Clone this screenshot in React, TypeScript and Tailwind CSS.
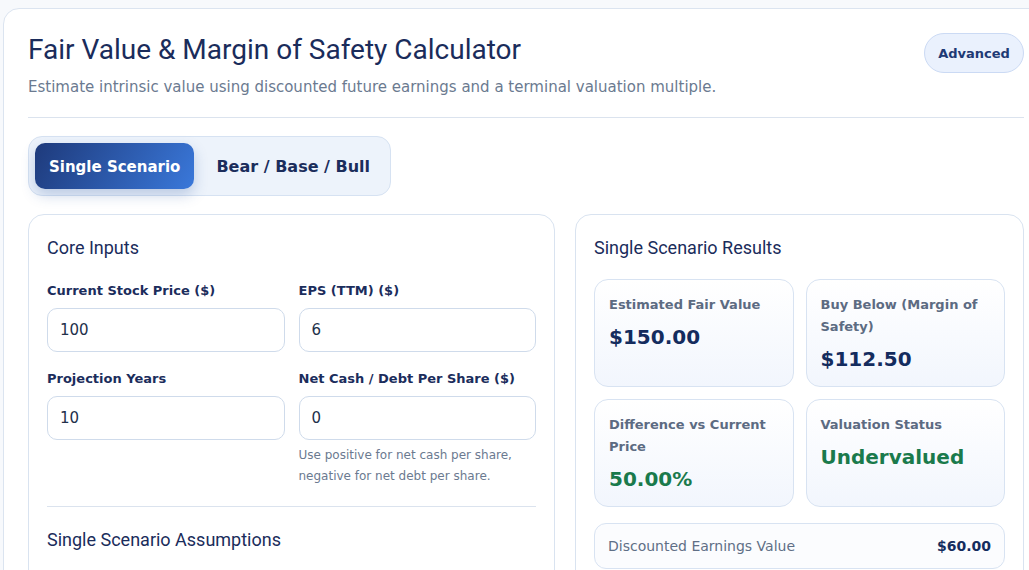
import React from "react";

function Field({ label, value, help }: { label: string; value: string; help?: React.ReactNode }) {
  return (
    <div className="flex flex-col">
      <label className="mb-[7px] text-[13px] font-bold leading-[20px] text-[#1b2d5c]">{label}</label>
      <input
        readOnly
        value={value}
        className="h-[44px] w-full rounded-[10px] border border-[#cfdbeb] bg-white px-[12px] text-[15px] text-[#22304a] outline-none"
      />
      {help && <p className="mt-[5px] text-[12px] leading-[21px] text-[#6b7a90]">{help}</p>}
    </div>
  );
}

function ResultCard({ label, value, green }: { label: string; value: string; green?: boolean }) {
  return (
    <div className="rounded-[14px] border border-[#d8e3f2] bg-[linear-gradient(180deg,#ffffff,#f2f6fd)] px-[14px] pb-[15px] pt-[14px]">
      <div className="text-[13px] font-bold leading-[22px] text-[#5c6b82]">{label}</div>
      <div
        className={
          "mt-[9px] text-[20px] font-bold leading-[24px] " + (green ? "text-[#1a7a4c]" : "text-[#142c5e]")
        }
      >
        {value}
      </div>
    </div>
  );
}

export default function App() {
  return (
    <div className="h-[570px] w-[1029px] overflow-hidden bg-[#f7f9fc] font-['DejaVu_Sans',sans-serif]">
      <div className="ml-[3px] mt-[8px] w-[1046px] rounded-[16px] border border-[#dbe4f0] bg-white px-[24px] pb-8 pt-[24px]">
        <div className="flex items-start justify-between">
          <div>
            <h1 className="font-['Roboto',sans-serif] text-[28px] font-normal leading-[34px] text-[#1a2c5b]">
              Fair Value &amp; Margin of Safety Calculator
            </h1>
            <p className="mt-[10px] text-[15px] leading-[20px] text-[#6b7a90]">
              Estimate intrinsic value using discounted future earnings and a terminal valuation multiple.
            </p>
          </div>
          <div className="flex h-[40px] w-[100px] items-center justify-center rounded-full border border-[#cbdaf4] bg-[#eaf1fd] pt-px text-[13px] font-bold text-[#1e3a75]">
            Advanced
          </div>
        </div>

        <div className="mt-[20px] border-t border-[#dbe3ee]" />

        <div className="mt-[18px] inline-flex items-center gap-2 rounded-[14px] border border-[#d6e2f2] bg-[#edf3fb] p-[6px]">
          <div className="rounded-[10px] bg-[linear-gradient(120deg,#1e3a7b,#3a78da)] px-[14px] pb-[12px] pt-[14px] text-[15px] font-bold leading-[20px] text-white shadow-[0_6px_14px_rgba(37,78,160,0.25)]">
            Single Scenario
          </div>
          <div className="px-[14px] pb-[12px] pt-[14px] text-[16px] font-bold leading-[20px] text-[#1b2d5c]">
            Bear / Base / Bull
          </div>
        </div>

        <div className="mt-[18px] grid grid-cols-[527px_1fr] gap-[20px]">
          <div className="rounded-[16px] border border-[#d9e3f0] bg-white px-[18px] pb-6 pt-[20px]">
            <h2 className="font-['Roboto',sans-serif] text-[18px] font-normal leading-[26px] text-[#1a2c5b]">
              Core Inputs
            </h2>
            <div className="mt-[20px] grid grid-cols-2 gap-x-[14px] gap-y-[17px]">
              <Field label="Current Stock Price ($)" value="100" />
              <Field label="EPS (TTM) ($)" value="6" />
              <Field label="Projection Years" value="10" />
              <Field
                label="Net Cash / Debt Per Share ($)"
                value="0"
                help={
                  <>
                    Use positive for net cash per share,
                    <br />
                    negative for net debt per share.
                  </>
                }
              />
            </div>
            <div className="mb-[20px] mt-[19px] border-t border-[#dbe3ee]" />
            <h2 className="font-['Roboto',sans-serif] text-[18px] font-normal leading-[26px] text-[#1a2c5b]">
              Single Scenario Assumptions
            </h2>
          </div>

          <div className="rounded-[16px] border border-[#d9e3f0] bg-white px-[18px] pb-6 pt-[20px]">
            <h2 className="font-['Roboto',sans-serif] text-[18px] font-normal leading-[26px] text-[#1a2c5b]">
              Single Scenario Results
            </h2>
            <div className="mt-[18px] grid grid-cols-2 gap-[12px]">
              <ResultCard label="Estimated Fair Value" value="$150.00" />
              <ResultCard label="Buy Below (Margin of Safety)" value="$112.50" />
              <ResultCard label="Difference vs Current Price" value="50.00%" green />
              <ResultCard label="Valuation Status" value="Undervalued" green />
            </div>
            <div className="mt-[16px] flex h-[46px] items-center justify-between rounded-[12px] border border-[#d8e3f2] bg-[#fbfcfe] px-[13px]">
              <span className="text-[14px] text-[#5f6f86]">Discounted Earnings Value</span>
              <span className="text-[14px] font-bold text-[#142c5e]">$60.00</span>
            </div>
          </div>
        </div>
      </div>
    </div>
  );
}
